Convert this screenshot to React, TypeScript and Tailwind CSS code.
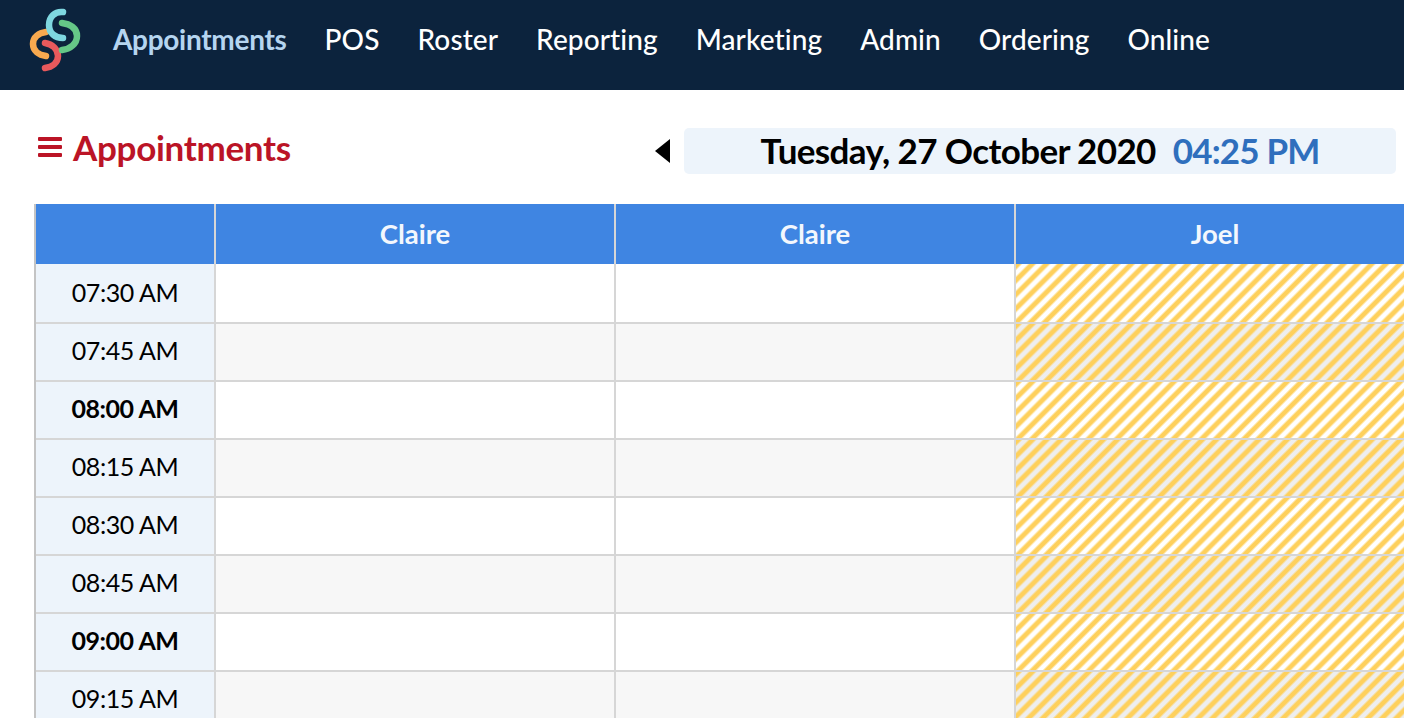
const nav = ["POS", "Roster", "Reporting", "Marketing", "Admin", "Ordering", "Online"];
const rows = [
  ["07:30 AM", false],
  ["07:45 AM", false],
  ["08:00 AM", true],
  ["08:15 AM", false],
  ["08:30 AM", false],
  ["08:45 AM", false],
  ["09:00 AM", true],
  ["09:15 AM", false],
] as const;

function Logo() {
  return (
    <svg width="52" height="64" viewBox="0 0 52 64" fill="none" strokeWidth="6.5" strokeLinecap="round" className="shrink-0">
      <path d="M17 24 C10 25 4 29 4 36 C4 43 10 47 17 48" stroke="#f8a94f" />
      <path d="M16 35 C23 36 29 41 29 48 C29 55 23 59 16 60" stroke="#e8595c" />
      <path d="M33 15 C41 16 48 20 48 28 C48 36 41 41 33 42" stroke="#66c787" />
      <path d="M34 4 C26 3 20 9 20 17 C20 25 26 30 34 30" stroke="#7fd7e0" />
    </svg>
  );
}

export default function App() {
  return (
    <div className="h-[718px] w-[1404px] overflow-hidden bg-white font-['Lato','Liberation_Sans',sans-serif]">
      <header className="flex h-[90px] items-center bg-[#0c233d] pl-[29px]">
        <div className="mb-[10px]">
          <Logo />
        </div>
        <nav className="ml-[32px] mb-[12px] flex gap-[38px] text-[28px] tracking-[0.1px] text-white">
          <span className="font-bold tracking-[-0.3px] text-[#b5d5f0]">Appointments</span>
          {nav.map((n) => (
            <span key={n} className="font-medium">{n}</span>
          ))}
        </nav>
      </header>

      <div className="flex h-[114px] items-start pl-[38px]">
        <div className="mt-[37px] flex items-center text-[#bb1426]">
          <div className="flex w-[25px] flex-col gap-[4px]">
            <span className="h-[4px] w-[24px] rounded-[1px] bg-[#bb1426]" />
            <span className="h-[4px] w-[24px] rounded-[1px] bg-[#bb1426]" />
            <span className="h-[4px] w-[24px] rounded-[1px] bg-[#bb1426]" />
          </div>
          <span className="ml-[10px] text-[35px] leading-[40px] font-bold tracking-[-0.3px]">Appointments</span>
        </div>
        <div className="mt-[38px] ml-auto flex items-center">
          <span className="h-0 w-0 border-y-[12px] border-r-[15px] border-y-transparent border-r-black" />
          <div className="ml-[14px] flex h-[46px] w-[712px] items-center justify-center gap-[17px] rounded-[5px] bg-[#edf4fb] pb-[2px] text-[35px] font-bold">
            <span className="tracking-[-0.62px] text-black">Tuesday, 27 October 2020</span>
            <span className="tracking-[-0.85px] text-[#2f6fbd]">04:25 PM</span>
          </div>
          <span className="w-2" />
        </div>
      </div>

      <div className="ml-[34px] border-l-2 border-[#c4c4c4]">
        <div className="flex h-[60px] bg-[#3f85e2] text-[27.5px] font-bold text-[#f3f7fd]">
          <div className="w-[178px] shrink-0" />
          <div className="flex w-[400px] shrink-0 items-center justify-center border-l-2 border-[#d6d6d6]">Claire</div>
          <div className="flex w-[400px] shrink-0 items-center justify-center border-l-2 border-[#d6d6d6]">Claire</div>
          <div className="flex w-[400px] shrink-0 items-center justify-center border-l-2 border-[#d6d6d6]">Joel</div>
        </div>
        {rows.map(([t, bold], i) => {
          const alt = i % 2 === 1;
          const first = i === 0;
          return (
            <div key={t} className={`flex border-b-2 border-[#d6d6d6] ${first ? "h-[60px]" : "h-[58px]"} ${alt ? "bg-[#f7f7f7]" : "bg-white"}`}>
              <div className={`flex w-[178px] shrink-0 items-center justify-center bg-[#edf4fb] text-[25px] tracking-[-0.45px] text-black ${first ? "" : "pb-[2px]"} ${bold ? "font-bold" : ""}`}>
                {t}
              </div>
              <div className="w-[400px] shrink-0 border-l-2 border-[#d6d6d6]" />
              <div className="w-[400px] shrink-0 border-l-2 border-[#d6d6d6]" />
              <div className={`w-[400px] shrink-0 border-l-2 border-[#d6d6d6] bg-[repeating-linear-gradient(135deg,#fed05c_0px,#fed05c_3px,transparent_5px,transparent_8px,#fed05c_10px)] ${alt ? "bg-[#eeeeee]" : ""}`} />
            </div>
          );
        })}
      </div>
    </div>
  );
}
